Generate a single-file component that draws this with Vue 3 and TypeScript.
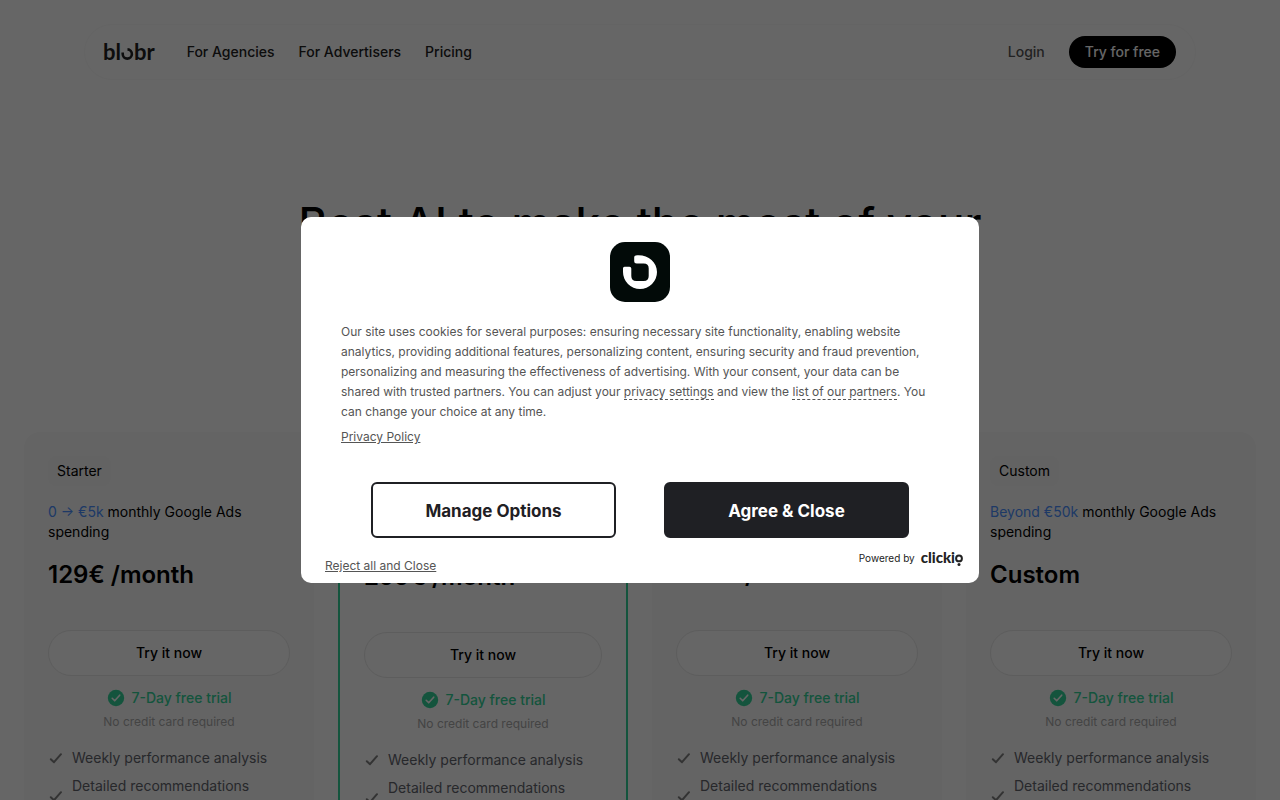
<script setup lang="ts">
interface Plan {
  id: number
  name?: string
  range?: string
  price: string
  featured?: boolean
}

const navLinks: string[] = ['For Agencies', 'For Advertisers', 'Pricing']

const plans: Plan[] = [
  { id: 1, name: 'Starter', range: '0 → €5k', price: '129€ /month' },
  { id: 2, price: '299€ /month', featured: true },
  { id: 3, price: '499€ /month' },
  { id: 4, name: 'Custom', range: 'Beyond €50k', price: 'Custom' },
]

const features: string[] = ['Weekly performance analysis', 'Detailed recommendations']
</script>

<template>
  <div class="page">
    <header class="nav">
      <a class="brand" href="#" aria-label="blobr">
        <span>bl</span>
        <svg width="13" height="12" viewBox="0 0 13 12" aria-hidden="true">
          <path d="M1.700 4.600V6a4.600 4.600 0 1 0 4.800-4.600" fill="none" stroke="currentColor" stroke-width="2.600" />
        </svg>
        <span>br</span>
      </a>
      <nav class="links">
        <a v-for="link in navLinks" :key="link" href="#">{{ link }}</a>
      </nav>
      <a class="login" href="#">Login</a>
      <button class="cta" type="button">Try for free</button>
    </header>

    <section class="hero">
      <h1>Best AI to make the most of your</h1>
    </section>

    <main class="plans">
      <article v-for="plan in plans" :key="plan.id" class="plan" :class="{ featured: plan.featured }">
        <div class="head">
          <span v-if="plan.name" class="tag">{{ plan.name }}</span>
          <p v-if="plan.range" class="spend">
            <span class="range">{{ plan.range }}</span> monthly Google Ads spending
          </p>
        </div>
        <h2>{{ plan.price }}</h2>
        <button class="try" type="button">Try it now</button>
        <p class="trial">
          <svg width="18" height="18" viewBox="0 0 18 18" aria-hidden="true">
            <circle cx="9" cy="9" r="8.200" fill="currentColor" />
            <path d="M5.200 9.300l2.500 2.500 5-5.600" fill="none" stroke="#fff" stroke-width="1.600" stroke-linecap="round" stroke-linejoin="round" />
          </svg>
          7-Day free trial
        </p>
        <p class="note">No credit card required</p>
        <ul>
          <li v-for="feature in features" :key="feature">
            <svg width="16" height="16" viewBox="0 0 16 16" aria-hidden="true">
              <path d="M2.800 9.200l3.200 3 7-8" fill="none" stroke="currentColor" stroke-width="2" stroke-linecap="round" stroke-linejoin="round" />
            </svg>
            <span>{{ feature }}</span>
          </li>
        </ul>
      </article>
    </main>
  </div>

  <div class="overlay">
    <section class="dialog" role="dialog" aria-modal="true" aria-label="Cookie consent">
      <svg class="mark" width="60" height="60" viewBox="0 0 60 60" aria-hidden="true">
        <rect width="60" height="60" rx="15" fill="#020a08" />
        <path
          d="M24.200 15.200Q24.200 13.600 25.800 13.400C37 11.900 47 19.500 47 30A17 17 0 0 1 13 30V26.200Q13 24.700 14.500 24.700H19.400Q21.300 24.700 21.300 26.600V34Q21.300 39 26.300 39H33.700Q38.700 39 38.700 34V26.500Q38.700 21.500 33.700 21.500H26.700Q24.200 21.500 24.200 19Z"
          fill="#fff"
        />
      </svg>
      <p class="copy">
        Our site uses cookies for several purposes: ensuring necessary site functionality, enabling website analytics,
        providing additional features, personalizing content, ensuring security and fraud prevention, personalizing and
        measuring the effectiveness of advertising. With your consent, your data can be shared with trusted partners.
        You can adjust your <a href="#">privacy settings</a> and view the <a href="#">list of our partners</a>. You can
        change your choice at any time.
      </p>
      <a class="policy" href="#">Privacy Policy</a>
      <div class="actions">
        <button class="manage" type="button">Manage Options</button>
        <button class="agree" type="button">Agree &amp; Close</button>
      </div>
      <footer>
        <a class="reject" href="#">Reject all and Close</a>
        <span class="powered">
          Powered by
          <a class="clickio" href="#" aria-label="clickio">
            <span>clicki</span>
            <svg width="8" height="13" viewBox="0 0 8 13" aria-hidden="true">
              <circle cx="4" cy="4.400" r="2.900" fill="none" stroke="currentColor" stroke-width="2" />
              <circle cx="4" cy="10.600" r="1.500" fill="currentColor" />
            </svg>
          </a>
        </span>
      </footer>
    </section>
  </div>
</template>

<style>
body {
  margin: 0;
  overflow: hidden;
  background: #fff;
}
</style>

<style scoped>
* {
  box-sizing: border-box;
}
.page,
.overlay,
button {
  font-family: Inter, 'Liberation Sans', sans-serif;
}
.page {
  height: 100vh;
  overflow: hidden;
  padding: 24px 24px 0;
  color: #000;
  font-size: 14px;
  line-height: 20px;
}
a {
  color: inherit;
  text-decoration: none;
}
p,
h1,
h2,
ul {
  margin: 0;
  padding: 0;
}
button {
  cursor: pointer;
}
.nav {
  display: flex;
  align-items: center;
  max-width: 1112px;
  height: 56px;
  margin: 0 auto;
  padding: 0 19px 0 18px;
  border: 1px solid #fafafa;
  border-radius: 28px;
  font-weight: 500;
  color: #222;
}
.brand {
  display: flex;
  align-items: baseline;
  font: 700 22px/28px Lato, sans-serif;
}
.links {
  display: flex;
  flex: 1;
  gap: 24px;
  margin-left: 32px;
}
.login {
  margin-right: 24px;
  color: #555;
}
.cta {
  height: 32px;
  padding: 0 16px 2px;
  border: 0;
  border-radius: 16px;
  background: #000;
  color: #fff;
  font-size: 14px;
  font-weight: 500;
}
.hero {
  height: 352px;
  padding-top: 115px;
}
h1 {
  font-size: 44px;
  font-weight: 500;
  line-height: 56px;
  text-align: center;
}
.plans {
  display: grid;
  grid-template-columns: repeat(4, minmax(0, 1fr));
  gap: 24px;
}
.plan {
  display: flex;
  flex-direction: column;
  padding: 24px;
  border-radius: 16px;
  background: #fafafa;
}
.featured {
  border: 2px solid #34d399;
  background: #fff;
}
.head {
  display: flex;
  flex-direction: column;
  align-items: flex-start;
  gap: 16px;
  min-height: 86px;
}
.tag {
  padding: 5px 9px;
  border-radius: 8px;
  background: #f7f7f7;
}
.range {
  color: #4b90ff;
}
h2 {
  margin: 17px 0 39px;
  font-size: 24px;
  font-weight: 600;
  line-height: 32px;
}
.try {
  height: 46px;
  padding: 0 0 2px;
  border: 1px solid #e8e8e8;
  border-radius: 23px;
  background: #fff;
  color: #000;
  font-size: 14px;
  font-weight: 500;
}
.trial {
  display: flex;
  align-items: center;
  justify-content: center;
  gap: 6px;
  margin-top: 12px;
  padding-left: 1px;
  color: #34d399;
  font-weight: 500;
}
.note {
  margin-top: 4px;
  color: #aaa;
  font-size: 12px;
  text-align: center;
}
ul {
  display: flex;
  flex-direction: column;
  gap: 8px;
  margin-top: 16px;
  list-style: none;
  color: #62656d;
}
li {
  display: flex;
  align-items: center;
  gap: 8px;
}
li svg {
  flex: none;
  color: #808080;
}
/* Long feature labels run over two lines. */
li:last-child {
  align-items: flex-start;
}
li:last-child svg {
  margin-top: 12px;
}
.overlay {
  position: fixed;
  inset: 0;
  display: flex;
  align-items: center;
  justify-content: center;
  background: rgba(0, 0, 0, 0.6);
}
.dialog {
  width: 678px;
  max-width: 100%;
  padding: 25px 24px 7px;
  border-radius: 10px;
  background: #fff;
  color: #555;
  font-size: 12px;
  line-height: 20px;
}
.mark {
  display: block;
  margin: 0 auto 20px;
}
.copy,
.policy {
  display: block;
  margin: 0 16px;
}
.copy a {
  border-bottom: 1px dashed #555;
}
.policy {
  margin-top: 5px;
}
.policy,
.reject {
  text-decoration: underline;
}
.actions {
  display: grid;
  grid-template-columns: 1fr 1fr;
  gap: 48px;
  margin: 35px 46px 0;
}
.actions button {
  height: 56px;
  padding: 2px 0 0;
  border: 2px solid #1f2024;
  border-radius: 6px;
  font-size: 17px;
  font-weight: 700;
}
.manage {
  background: #fff;
  color: #1f2024;
}
.agree {
  background: #1f2024;
  color: #fff;
}
footer {
  display: flex;
  justify-content: space-between;
  margin-right: -8px;
  padding-top: 10px;
}
.reject {
  margin-top: 8px;
}
.powered {
  display: flex;
  gap: 6px;
  color: #222;
  font-size: 10px;
}
.clickio {
  display: flex;
  align-items: baseline;
  font: 900 15px/18px Lato, sans-serif;
}
.clickio svg {
  align-self: flex-start;
  margin-top: 6px;
}
</style>
